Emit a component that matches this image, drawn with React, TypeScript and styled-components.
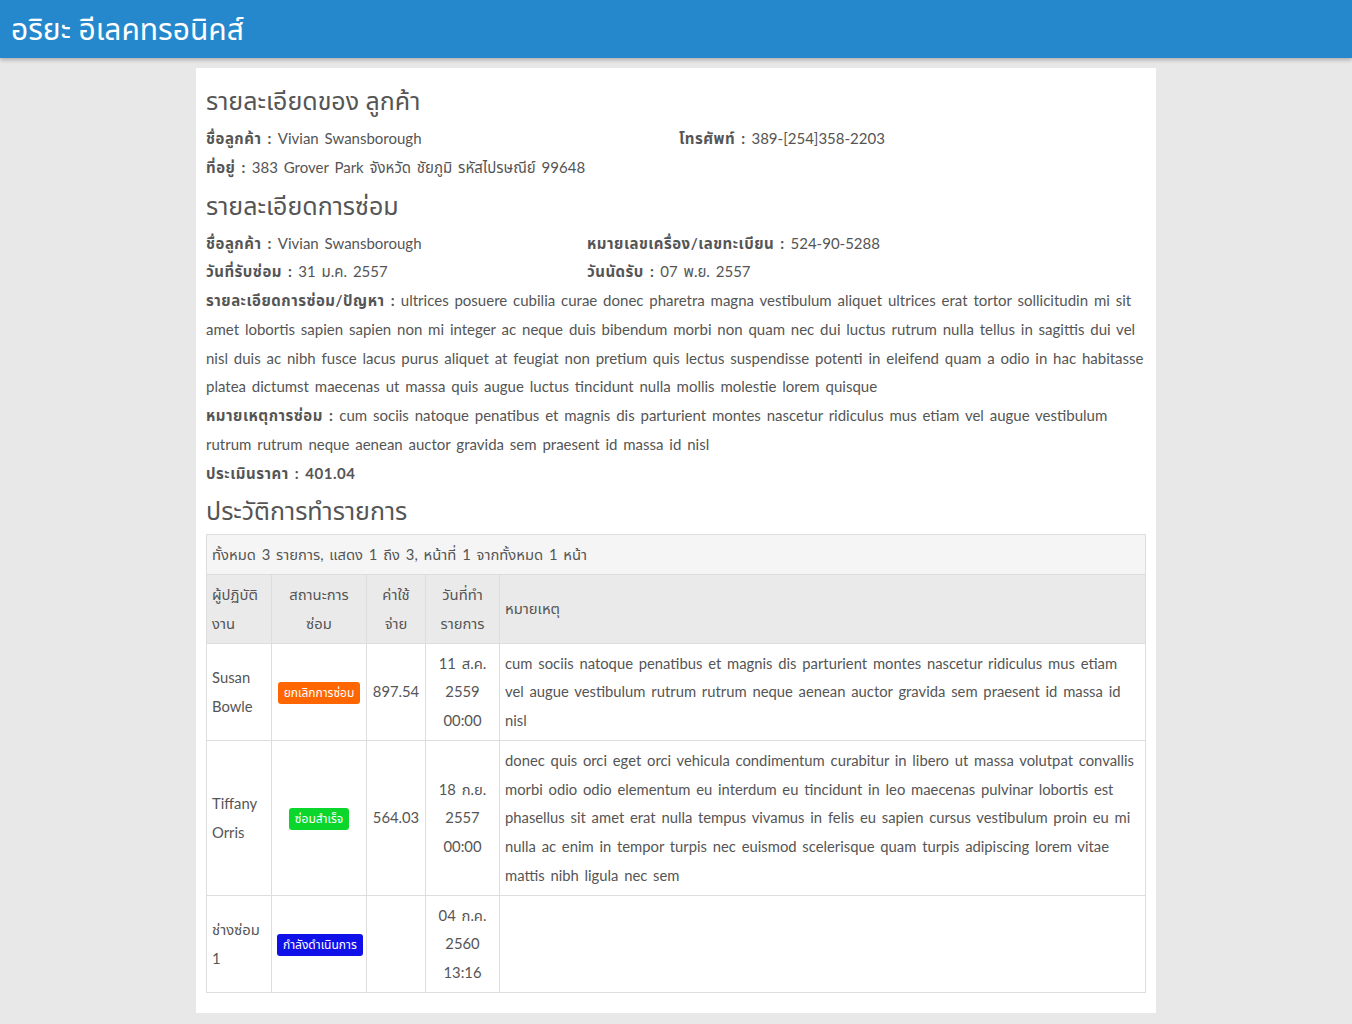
import styled, { createGlobalStyle } from 'styled-components';

// ─── Global ──────────────────────────────────────────────────────────────────

const GlobalStyle = createGlobalStyle`
  * { box-sizing: border-box; }
  body {
    margin: 0;
    background: #e8e8e8;
    font-family: Lato, 'Noto Sans Thai', 'Noto Sans', sans-serif;
    color: #555;
    font-size: 15px;
    word-spacing: 2px;
  }
`;

// ─── Layout ──────────────────────────────────────────────────────────────────

const TopBar = styled.header`
  height: 58px;
  background: #2588cc;
  box-shadow: 0 2px 4px rgba(0, 0, 0, 0.25);
  display: flex;
  align-items: center;
  padding: 4px 11px 0;
`;

const Brand = styled.h1`
  margin: 0;
  font-size: 30px;
  font-weight: 400;
  color: #fff;
  word-spacing: 0;
`;

const Page = styled.main`
  width: 960px;
  margin: 10px auto 0;
  background: #fff;
  padding: 9px 10px 20px;
`;

const SectionTitle = styled.h2`
  margin: 3px 0 4px;
  font-size: 25px;
  font-weight: 400;
  line-height: 40px;
  color: #555;
  word-spacing: 0;
`;

const InfoGrid = styled.div<{ $split: string }>`
  display: grid;
  grid-template-columns: ${({ $split }) => $split};
`;

const Line = styled.div<{ $full?: boolean }>`
  line-height: 28.75px;
  ${({ $full }) => ($full ? 'grid-column: 1 / -1;' : '')}
`;

const Label = styled.b`
  font-weight: 700;
  letter-spacing: 0.5px;
  color: #555;
`;

// ─── Table ───────────────────────────────────────────────────────────────────

const Table = styled.table`
  width: 100%;
  table-layout: fixed;
  border-collapse: collapse;
  border: 1px solid #ddd;
  font-size: 14.8px;
  line-height: 28.75px;
`;

const Col = styled.col<{ $w?: number }>`
  ${({ $w }) => ($w ? `width: ${$w}px;` : '')}
`;

const Caption = styled.td`
  background: #f5f5f5;
  padding: 5px 5px;
  border: 1px solid #ddd;
`;

const Th = styled.th<{ $center?: boolean }>`
  background: #eaeaea;
  font-weight: 400;
  text-align: ${({ $center }) => ($center ? 'center' : 'left')};
  padding: 5px 5px;
  border: 1px solid #ddd;
`;

const Td = styled.td<{ $center?: boolean }>`
  padding: 5px 5px;
  border: 1px solid #ddd;
  vertical-align: middle;
  text-align: ${({ $center }) => ($center ? 'center' : 'left')};
`;

const Badge = styled.span<{ $bg: string }>`
  display: inline-block;
  background: ${({ $bg }) => $bg};
  color: #fff;
  font-size: 12px;
  line-height: 22px;
  padding: 0 6px;
  border-radius: 3px;
  white-space: nowrap;
  word-spacing: 0;
`;

type Row = {
  who: string[];
  status: string;
  color: string;
  cost: string;
  date: string[];
  note: string;
};

const rows: Row[] = [
  {
    who: ['Susan', 'Bowle'],
    status: 'ยกเลิกการซ่อม',
    color: '#ff6600',
    cost: '897.54',
    date: ['11 ส.ค.', '2559', '00:00'],
    note: 'cum sociis natoque penatibus et magnis dis parturient montes nascetur ridiculus mus etiam vel augue vestibulum rutrum rutrum neque aenean auctor gravida sem praesent id massa id nisl',
  },
  {
    who: ['Tiffany', 'Orris'],
    status: 'ซ่อมสำเร็จ',
    color: '#0bd62b',
    cost: '564.03',
    date: ['18 ก.ย.', '2557', '00:00'],
    note: 'donec quis orci eget orci vehicula condimentum curabitur in libero ut massa volutpat convallis morbi odio odio elementum eu interdum eu tincidunt in leo maecenas pulvinar lobortis est phasellus sit amet erat nulla tempus vivamus in felis eu sapien cursus vestibulum proin eu mi nulla ac enim in tempor turpis nec euismod scelerisque quam turpis adipiscing lorem vitae mattis nibh ligula nec sem',
  },
  {
    who: ['ช่างซ่อม', '1'],
    status: 'กำลังดำเนินการ',
    color: '#1010e8',
    cost: '',
    date: ['04 ก.ค.', '2560', '13:16'],
    note: '',
  },
];

const stack = (parts: string[]) =>
  parts.map((p, i) => (
    <span key={i}>
      {p}
      {i < parts.length - 1 && <br />}
    </span>
  ));

export default function App() {
  return (
    <>
      <GlobalStyle />
      <TopBar>
        <Brand>อริยะ อีเลคทรอนิคส์</Brand>
      </TopBar>

      <Page>
        <SectionTitle>รายละเอียดของ ลูกค้า</SectionTitle>
        <InfoGrid $split="473px 1fr">
          <Line><Label>ชื่อลูกค้า :</Label> Vivian Swansborough</Line>
          <Line><Label>โทรศัพท์ :</Label> 389-[254]358-2203</Line>
          <Line $full><Label>ที่อยู่ :</Label> 383 Grover Park จังหวัด ชัยภูมิ รหัสไปรษณีย์ 99648</Line>
        </InfoGrid>

        <SectionTitle>รายละเอียดการซ่อม</SectionTitle>
        <InfoGrid $split="381px 1fr">
          <Line><Label>ชื่อลูกค้า :</Label> Vivian Swansborough</Line>
          <Line><Label>หมายเลขเครื่อง/เลขทะเบียน :</Label> 524-90-5288</Line>
          <Line><Label>วันที่รับซ่อม :</Label> 31 ม.ค. 2557</Line>
          <Line><Label>วันนัดรับ :</Label> 07 พ.ย. 2557</Line>
          <Line $full>
            <Label>รายละเอียดการซ่อม/ปัญหา :</Label> ultrices posuere cubilia curae donec pharetra magna vestibulum aliquet ultrices erat tortor sollicitudin mi sit amet lobortis sapien sapien non mi integer ac neque duis bibendum morbi non quam nec dui luctus rutrum nulla tellus in sagittis dui vel nisl duis ac nibh fusce lacus purus aliquet at feugiat non pretium quis lectus suspendisse potenti in eleifend quam a odio in hac habitasse platea dictumst maecenas ut massa quis augue luctus tincidunt nulla mollis molestie lorem quisque
          </Line>
          <Line $full>
            <Label>หมายเหตุการซ่อม :</Label> cum sociis natoque penatibus et magnis dis parturient montes nascetur ridiculus mus etiam vel augue vestibulum rutrum rutrum neque aenean auctor gravida sem praesent id massa id nisl
          </Line>
          <Line $full><Label>ประเมินราคา : 401.04</Label></Line>
        </InfoGrid>

        <SectionTitle>ประวัติการทำรายการ</SectionTitle>
        <Table>
          <colgroup>
            <Col $w={65} />
            <Col $w={95} />
            <Col $w={59} />
            <Col $w={74} />
            <Col />
          </colgroup>
          <tbody>
            <tr>
              <Caption colSpan={5}>ทั้งหมด 3 รายการ, แสดง 1 ถึง 3, หน้าที่ 1 จากทั้งหมด 1 หน้า</Caption>
            </tr>
            <tr>
              <Th>ผู้ปฏิบัติ<br />งาน</Th>
              <Th $center>สถานะการ<br />ซ่อม</Th>
              <Th $center>ค่าใช้<br />จ่าย</Th>
              <Th $center>วันที่ทำ<br />รายการ</Th>
              <Th>หมายเหตุ</Th>
            </tr>
            {rows.map((r, i) => (
              <tr key={i}>
                <Td>{stack(r.who)}</Td>
                <Td $center><Badge $bg={r.color}>{r.status}</Badge></Td>
                <Td $center>{r.cost}</Td>
                <Td $center>{stack(r.date)}</Td>
                <Td>{r.note}</Td>
              </tr>
            ))}
          </tbody>
        </Table>
      </Page>
    </>
  );
}
